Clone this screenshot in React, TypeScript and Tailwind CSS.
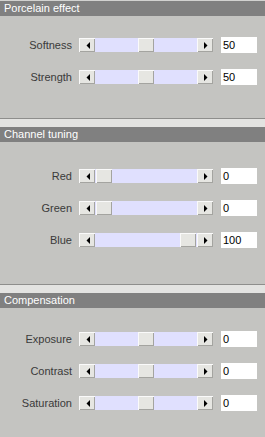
type Row = { label: string; value: number };

const sections: { title: string; pad: string; rows: Row[]; first?: boolean }[] = [
  {
    title: 'Porcelain effect',
    pad: 'pt-[13px] pb-[25px]',
    first: true,
    rows: [
      { label: 'Softness', value: 50 },
      { label: 'Strength', value: 50 },
    ],
  },
  {
    title: 'Channel tuning',
    pad: 'pt-[18px] pb-[28px]',
    rows: [
      { label: 'Red', value: 0 },
      { label: 'Green', value: 0 },
      { label: 'Blue', value: 100 },
    ],
  },
  {
    title: 'Compensation',
    pad: 'pt-[15px]',
    rows: [
      { label: 'Exposure', value: 50 },
      { label: 'Contrast', value: 50 },
      { label: 'Saturation', value: 50 },
    ],
  },
];

// value shown in the box (compensation sliders sit centred but read 0)
const shown: Record<string, string> = {
  Softness: '50',
  Strength: '50',
  Red: '0',
  Green: '0',
  Blue: '100',
  Exposure: '0',
  Contrast: '0',
  Saturation: '0',
};

const bevel =
  'bg-[#e6e6e2] border-t border-l border-[#fafafa] border-b-[#5c5c5c] border-r-[#5c5c5c] shadow-[inset_-1px_-1px_#a4a4a0]';

function Arrow({ dir }: { dir: 'left' | 'right' }) {
  return (
    <svg width="4" height="7" viewBox="0 0 4 7">
      {dir === 'left' ? <polygon points="4,0 4,7 0.5,3.5" fill="#000" /> : <polygon points="0,0 0,7 3.5,3.5" fill="#000" />}
    </svg>
  );
}

function Slider({ value }: { value: number }) {
  return (
    <div className="ml-[7px] flex h-[14px] w-[134px]">
      <div className={`flex h-[14px] w-[16px] items-center justify-center ${bevel}`}>
        <Arrow dir="left" />
      </div>
      <div className="relative h-[14px] flex-1 bg-[#e0e0fe]">
        <div className={`absolute top-0 h-[14px] w-[16px] ${bevel}`} style={{ left: 1 + (value / 100) * 84 }} />
      </div>
      <div className={`flex h-[14px] w-[16px] items-center justify-center ${bevel}`}>
        <Arrow dir="right" />
      </div>
    </div>
  );
}

export default function App() {
  return (
    <div className="h-[437px] w-[265px] overflow-hidden bg-[#c4c4c1] font-['Liberation_Sans',Arial,sans-serif]">
      {sections.map((s) => (
        <div key={s.title}>
          {s.first ? (
            <div className="h-px bg-[#d2d2d0]" />
          ) : (
            <>
              <div className="h-px bg-[#8e8e8c]" />
              <div className="h-[8px] bg-[#e3e3e1]" />
            </>
          )}
          <div className="h-[15px] bg-[#808080] pl-[4px] text-[11px] leading-[15px] text-white">{s.title}</div>
          <div className={s.pad}>
            {s.rows.map((r) => (
              <div key={r.label} className="flex h-[32px] items-center">
                <div className="w-[72px] text-right text-[11px] text-[#3a3a3a]">{r.label}</div>
                <Slider value={r.value} />
                <div className="ml-[8px] h-[16px] w-[36px] bg-white pl-[2px] text-[11px] leading-[16px] text-black">
                  {shown[r.label]}
                </div>
              </div>
            ))}
          </div>
        </div>
      ))}
    </div>
  );
}
